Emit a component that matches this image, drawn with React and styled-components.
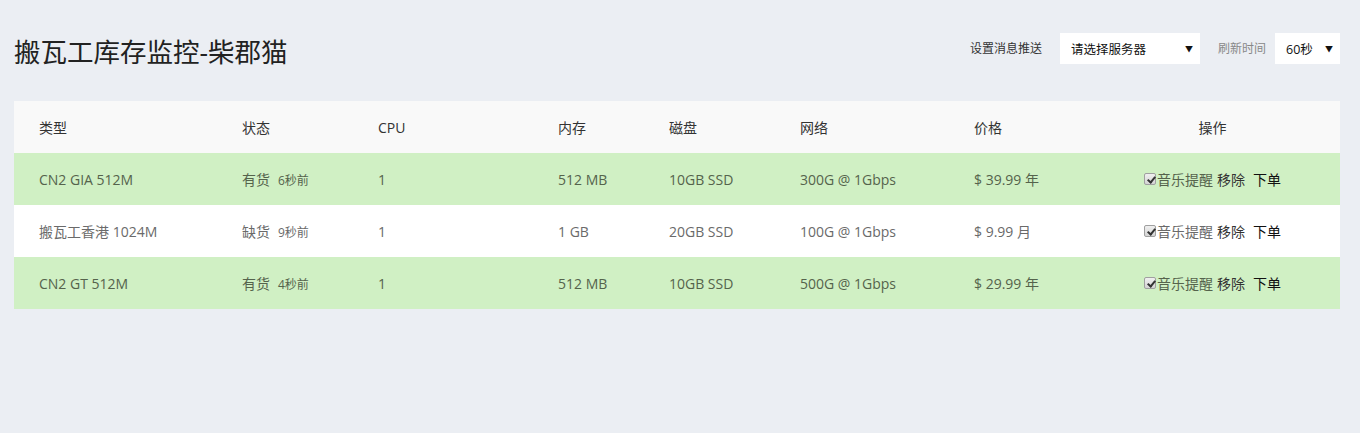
import React from 'react';
import styled, { createGlobalStyle } from 'styled-components';

const GlobalStyle = createGlobalStyle`
  body {
    margin: 0;
    background: #ebeef3;
    font-family: "Open Sans", "Noto Sans CJK SC", sans-serif;
    color: #333;
  }
`;

const Page = styled.div`
  padding: 30px 20px 0 14px;
`;

const TopBar = styled.div`
  display: flex;
  align-items: center;
  justify-content: space-between;
  height: 40px;
  margin-bottom: 31px;
`;

const Title = styled.h1`
  margin: 0;
  font-size: 26.5px;
  font-weight: 400;
  color: #222;
`;

const Controls = styled.div`
  display: flex;
  align-items: center;
  margin-top: -4px;
`;

const Label = styled.span`
  font-size: 12px;
  color: ${(p) => (p.muted ? '#888' : '#333')};
  margin-right: ${(p) => p.gap}px;
`;

const Select = styled.div`
  display: flex;
  align-items: center;
  justify-content: space-between;
  box-sizing: border-box;
  width: ${(p) => p.width}px;
  height: 31px;
  padding: 0 7px 0 11px;
  background: #fff;
  font-size: 12.5px;
  color: #111;
  margin-right: ${(p) => p.gap || 0}px;
`;

const Caret = styled.span`
  font-size: 8px;
  color: #111;
`;

const Table = styled.table`
  width: 100%;
  border-collapse: collapse;
  table-layout: fixed;
  font-size: 14px;
`;

const HeadCell = styled.th`
  height: 52px;
  padding: 0 0 0 25px;
  background: #f9f9f9;
  font-weight: 400;
  color: #333;
  text-align: ${(p) => (p.center ? 'center' : 'left')};
  ${(p) => p.center && 'padding: 0;'}
`;

const Row = styled.tr`
  background: ${(p) => (p.inStock ? '#d0f0c4' : '#fff')};
  color: ${(p) => (p.inStock ? '#55634c' : '#6a6a6a')};
`;

const Cell = styled.td`
  height: 52px;
  padding: 0 0 0 25px;
  white-space: nowrap;
  text-align: ${(p) => (p.center ? 'center' : 'left')};
  ${(p) => p.center && 'padding: 0;'}
`;

const Ago = styled.span`
  font-size: 12px;
  margin-left: 8px;
`;

const Actions = styled.span`
  display: inline-flex;
  align-items: center;
`;

const Check = styled.span`
  position: relative;
  display: inline-block;
  width: 12px;
  height: 12px;
  margin-right: 1px;
  box-sizing: border-box;
  border: 1px solid #a0a0a0;
  border-radius: 2px;
  background: linear-gradient(#f0f0f0, #d4d4d4);

  &::after {
    content: '';
    position: absolute;
    left: 3.5px;
    top: 0.5px;
    width: 3px;
    height: 6px;
    border: solid #333;
    border-width: 0 2px 2px 0;
    transform: rotate(40deg);
  }
`;

const Link = styled.a`
  color: ${(p) => (p.dark ? '#111' : '#333')};
  margin-left: ${(p) => p.gap}px;
  cursor: pointer;
`;

const columns = [203, 136, 180, 111, 131, 174, 136, 255];
const headers = ['类型', '状态', 'CPU', '内存', '磁盘', '网络', '价格'];

const plans = [
  { name: 'CN2 GIA 512M', stock: true, ago: '6秒前', cpu: '1', ram: '512 MB', disk: '10GB SSD', net: '300G @ 1Gbps', price: '$ 39.99 年' },
  { name: '搬瓦工香港 1024M', stock: false, ago: '9秒前', cpu: '1', ram: '1 GB', disk: '20GB SSD', net: '100G @ 1Gbps', price: '$ 9.99 月' },
  { name: 'CN2 GT 512M', stock: true, ago: '4秒前', cpu: '1', ram: '512 MB', disk: '10GB SSD', net: '500G @ 1Gbps', price: '$ 29.99 年' },
];

export default function App() {
  return (
    <Page>
      <GlobalStyle />
      <TopBar>
        <Title>搬瓦工库存监控-柴郡猫</Title>
        <Controls>
          <Label gap={18}>设置消息推送</Label>
          <Select width={140} gap={18}>
            请选择服务器
            <Caret>▼</Caret>
          </Select>
          <Label muted gap={9}>刷新时间</Label>
          <Select width={65}>
            60秒
            <Caret>▼</Caret>
          </Select>
        </Controls>
      </TopBar>
      <Table>
        <colgroup>
          {columns.map((w, i) => <col key={i} style={{ width: w }} />)}
        </colgroup>
        <thead>
          <tr>
            {headers.map((h) => <HeadCell key={h}>{h}</HeadCell>)}
            <HeadCell center>操作</HeadCell>
          </tr>
        </thead>
        <tbody>
          {plans.map((p) => (
            <Row key={p.name} inStock={p.stock}>
              <Cell>{p.name}</Cell>
              <Cell>
                {p.stock ? '有货' : '缺货'}
                <Ago>{p.ago}</Ago>
              </Cell>
              <Cell>{p.cpu}</Cell>
              <Cell>{p.ram}</Cell>
              <Cell>{p.disk}</Cell>
              <Cell>{p.net}</Cell>
              <Cell>{p.price}</Cell>
              <Cell center>
                <Actions>
                  <Check />
                  音乐提醒
                  <Link gap={4}>移除</Link>
                  <Link dark gap={8}>下单</Link>
                </Actions>
              </Cell>
            </Row>
          ))}
        </tbody>
      </Table>
    </Page>
  );
}
